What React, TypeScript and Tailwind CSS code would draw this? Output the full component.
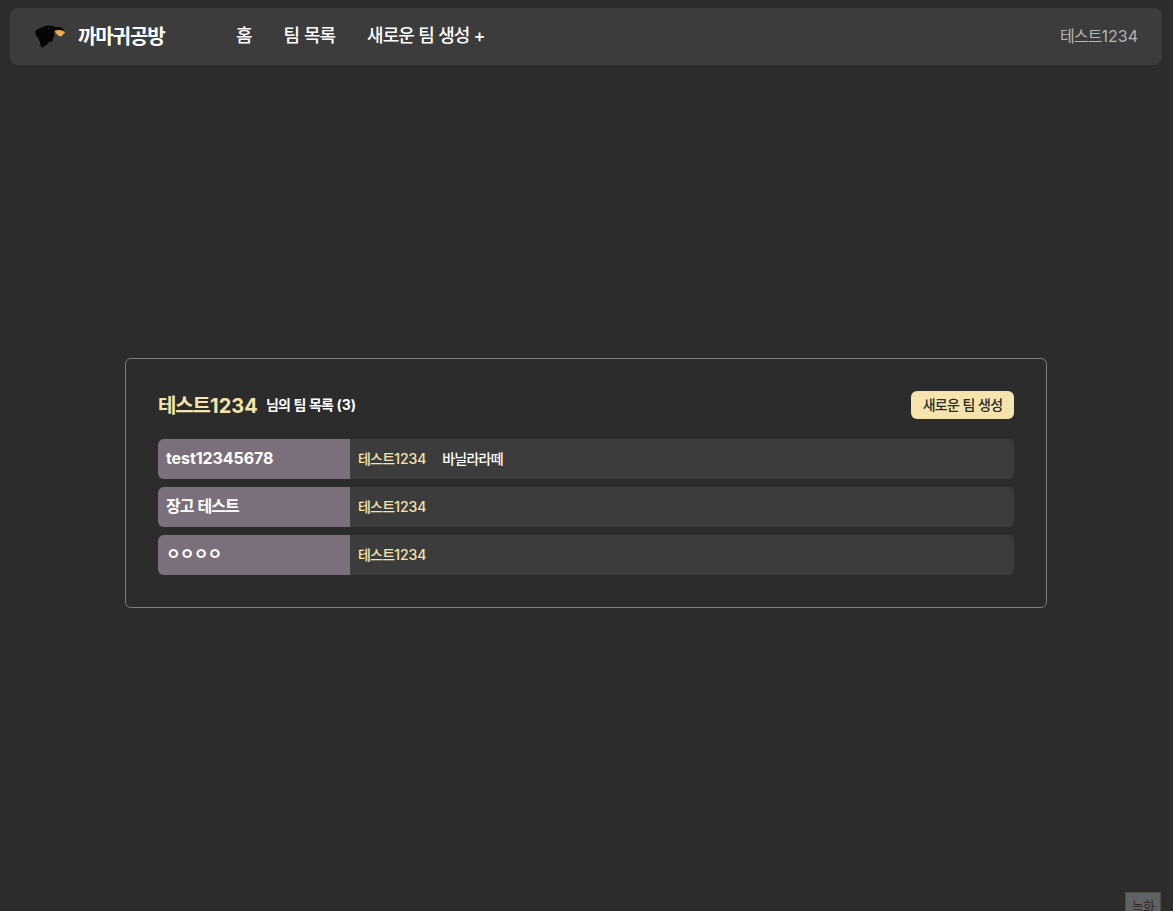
import React from "react";

type Team = { name: string; members: string[] };

const USER = "테스트1234";

const TEAMS: Team[] = [
  { name: "test12345678", members: [USER, "바닐라라떼"] },
  { name: "장고 테스트", members: [USER] },
  { name: "ㅇㅇㅇㅇ", members: [USER] },
];

/* Sets Hangul runs a little tighter than Latin runs. */
function T({ children, latin = "" }: { children: string; latin?: string }) {
  const runs = children.split(/([ㄱ-ㅎ가-힣]+)/).filter(Boolean);
  return (
    <span className="whitespace-pre">
      {runs.map((run, i) =>
        /[ㄱ-ㅎ가-힣]/.test(run) ? (
          <span key={i} className="tracking-[-0.055em]">{run}</span>
        ) : (
          <span key={i} className={latin}>{run}</span>
        )
      )}
    </span>
  );
}

function CrowLogo() {
  return (
    <svg width="32" height="26" viewBox="0 0 32 26" className="shrink-0">
      <path
        d="M1 7.5C3 5 6 4.2 8.5 3.2C11 1.6 14 1.3 17 1.7C19 2 20.5 2.8 22 3.1C26 2.8 29.5 4 30.3 6.4L29 6.8L21 7.2C19.8 8.5 19.8 10.5 20.4 12L19 14.5L18 18L15.3 17.6L13 20.5L8 23.8L6.5 21.5C6.3 17.5 4.5 14 1.8 11Z"
        fill="#050505"
      />
      <path d="M20.3 6.9C23.5 5.4 28.5 5.8 31.2 8.2L27.3 12.6C25 12.4 22.5 10.4 20.3 6.9Z" fill="#e9ad4c" />
      <circle cx="14.8" cy="4.2" r="0.8" fill="#303030" />
    </svg>
  );
}

export default function App() {
  return (
    <div className="flex h-screen flex-col overflow-hidden bg-[#2c2c2c] pt-2 font-['Inter','Noto_Sans_CJK_KR',sans-serif] text-white">
      <header className="ml-[10px] flex h-[57px] w-[1152px] shrink-0 items-center rounded-lg bg-[#3c3c3c] pr-6 pl-6">
        <div className="flex w-[202px] items-center gap-3">
          <CrowLogo />
          <span className="text-[20px] leading-6 font-bold"><T>까마귀공방</T></span>
        </div>
        <nav className="flex flex-1 gap-8 pb-px text-[18px] leading-6 font-medium">
          <a><T>홈</T></a>
          <a><T>팀 목록</T></a>
          <a><T latin="tracking-[-0.025em]">새로운 팀 생성 +</T></a>
        </nav>
        <span className="pb-0.5 text-[16px] leading-6 text-[#b5b5b5]"><T>{USER}</T></span>
      </header>

      <main className="mt-[293px] ml-[125px] w-[922px] rounded-md border border-[#7c7c7c] p-8">
        <div className="flex h-7 items-center justify-between">
          <h1 className="flex items-center gap-2">
            <span className="pt-0.5 text-[20px] leading-6 font-bold text-[#f5e4ad]"><T latin="tracking-[0.005em]">{USER}</T></span>
            <span className="text-[14px] leading-6 font-bold"><T>{`님의 팀 목록 (${TEAMS.length})`}</T></span>
          </h1>
          <button className="flex h-7 w-[103px] items-center justify-center rounded-md bg-[#f5e4ad] text-[14px] leading-5 font-medium text-[#2c2c2c]">
            <T latin="tracking-[-0.02em]">새로운 팀 생성</T>
          </button>
        </div>
        <ul className="mt-5 flex flex-col gap-2">
          {TEAMS.map((team) => (
            <li key={team.name} className="flex h-10 overflow-hidden rounded-md bg-[#3c3c3c]">
              <div className="flex w-48 items-center bg-[#7b6f7b] px-2 pb-0.5 text-[16px] leading-6 font-bold"><T latin="tracking-[-0.005em]">{team.name}</T></div>
              <div className="flex items-center gap-4 px-2 text-[14px] leading-5 font-medium">
                {team.members.map((member) => (
                  <span key={member} className={member === USER ? "text-[#f5e4ad]" : "text-white"}><T latin="tracking-[-0.01em]">{member}</T></span>
                ))}
              </div>
            </li>
          ))}
        </ul>
      </main>

      <button className="fixed top-[892px] left-[1125px] flex h-7 w-9 items-center justify-center border border-[#505048] bg-[#5e6262] text-[13px] leading-5 text-[#35292c]">
        <T>녹화</T>
      </button>
    </div>
  );
}
